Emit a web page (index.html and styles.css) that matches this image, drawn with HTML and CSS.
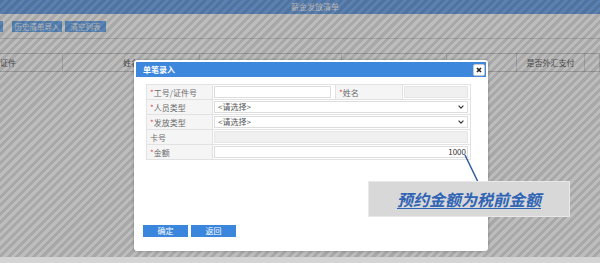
FILE: index.html
```html
<!DOCTYPE html>
<html lang="zh-CN">
<head>
    <meta charset="UTF-8">
    <meta name="viewport" content="width=device-width, initial-scale=1.0">
    <title>薪金发放清单</title>
    <link rel="stylesheet" href="styles.css">
</head>
<body>
    <div class="page">
        <div class="topbar">薪金发放清单</div>
        <div class="toolbar">
            <button class="tb-btn tb-cut"></button>
            <button class="tb-btn tb-hist">历史清单导入</button>
            <button class="tb-btn tb-clear">清空列表</button>
        </div>
        <div class="grid-head">
            <div class="gh-cell gh-left">证件</div>
            <div class="gh-cell">姓名</div>
            <div class="gh-cell"></div>
            <div class="gh-cell"></div>
            <div class="gh-cell"></div>
            <div class="gh-cell">是否外汇支付</div>
            <div class="gh-cell"></div>
        </div>
    </div>

    <!-- modal backdrop -->
    <div class="mask"></div>

    <div class="dialog">
        <div class="dlg-title">
            <span>单笔录入</span>
            <span class="dlg-close">
                <svg width="6" height="6" viewBox="0 0 6 6"><path d="M1 1L5 5M5 1L1 5" stroke="#222" stroke-width="1.6"/></svg>
            </span>
        </div>
        <div class="dlg-body">
            <table class="form-table">
                <colgroup>
                    <col class="c-lbl">
                    <col class="c-val">
                    <col class="c-lbl2">
                    <col class="c-val2">
                </colgroup>
                <tr>
                    <td class="lbl"><i>*</i>工号/证件号</td>
                    <td><div class="inp inp-short"></div></td>
                    <td class="lbl"><i>*</i>姓名</td>
                    <td><div class="inp inp-gray"></div></td>
                </tr>
                <tr>
                    <td class="lbl"><i>*</i>人员类型</td>
                    <td colspan="3">
                        <div class="inp sel"><span>&lt;请选择&gt;</span>
                            <svg width="6" height="4" viewBox="0 0 6 4"><path d="M0.6 0.6L3 3.1L5.4 0.6" fill="none" stroke="#333" stroke-width="1.1"/></svg>
                        </div>
                    </td>
                </tr>
                <tr>
                    <td class="lbl"><i>*</i>发放类型</td>
                    <td colspan="3">
                        <div class="inp sel"><span>&lt;请选择&gt;</span>
                            <svg width="6" height="4" viewBox="0 0 6 4"><path d="M0.6 0.6L3 3.1L5.4 0.6" fill="none" stroke="#333" stroke-width="1.1"/></svg>
                        </div>
                    </td>
                </tr>
                <tr>
                    <td class="lbl">卡号</td>
                    <td colspan="3"><div class="inp inp-gray"></div></td>
                </tr>
                <tr>
                    <td class="lbl"><i>*</i>金额</td>
                    <td colspan="3"><div class="inp inp-money">1000</div></td>
                </tr>
            </table>
            <div class="dlg-foot">
                <button class="btn">确定</button>
                <button class="btn">返回</button>
            </div>
        </div>
    </div>

    <svg class="connector" width="20" height="30" viewBox="0 0 20 30">
        <line x1="3" y1="1" x2="16" y2="28" stroke="#2c5c9c" stroke-width="1.5"/>
    </svg>
    <div class="callout">预约金额为税前金额</div>
</body>
</html>
```

FILE: styles.css
```css
* {
    box-sizing: border-box;
    margin: 0;
    padding: 0;
}

body {
    width: 600px;
    height: 263px;
    overflow: hidden;
    position: relative;
    background-color: #d4d4d4;
    font-family: "Noto Sans CJK SC", "Noto Sans", sans-serif;
    font-size: 8px;
}

.page {
    height: 257px;
    background-color: #ffffff;
}

.topbar {
    height: 14px;
    line-height: 14px;
    background-color: #7aaef0;
    color: #ffffff;
    text-align: center;
    padding-left: 30px;
}

.toolbar {
    display: flex;
    align-items: flex-start;
    height: 25px;
    padding-top: 7px;
    border-bottom: 1px solid #dddddd;
}

.tb-btn {
    height: 11px;
    line-height: 11px;
    border: none;
    background-color: #78b4f8;
    color: #ffffff;
    font-family: inherit;
    font-size: 7.5px;
    text-align: center;
}

.tb-cut {
    width: 3px;
}

.tb-hist {
    width: 50px;
    margin-left: 9px;
}

.tb-clear {
    width: 41px;
    margin-left: 3px;
}

.grid-head {
    display: grid;
    grid-template-columns: 63px 137px 142px 105px 70px 68px 15px;
    height: 19px;
    margin-top: 14px;
    border-top: 1px solid #d0d0d0;
    border-bottom: 1px solid #d0d0d0;
}

.gh-cell {
    border-right: 1px solid #dddddd;
    color: #6a6a6a;
    text-align: center;
    line-height: 17px;
}

.gh-left {
    text-align: left;
}

.mask {
    position: absolute;
    left: 0;
    top: 0;
    width: 600px;
    height: 257px;
    background: repeating-linear-gradient(135deg, rgba(0, 0, 0, 0.34) 0 3px, rgba(0, 0, 0, 0.26) 3px 6px);
}

/* dialog */
.dialog {
    position: absolute;
    left: 134px;
    top: 60px;
    width: 354px;
    height: 191px;
    padding: 2px;
    background-color: #ffffff;
    border-radius: 3px;
    box-shadow: 0 0 3px rgba(0, 0, 0, 0.3);
    display: flex;
    flex-direction: column;
}

.dlg-title {
    height: 15px;
    display: flex;
    align-items: center;
    justify-content: space-between;
    padding: 0 1px 0 7px;
    background-color: #3d87dd;
    color: #ffffff;
    font-weight: bold;
}

.dlg-close {
    width: 12px;
    height: 12px;
    display: flex;
    align-items: center;
    justify-content: center;
    background-color: #ffffff;
    border: 1px solid #c8c8c8;
    border-radius: 2px;
}

.dlg-body {
    flex: 1;
    display: flex;
    flex-direction: column;
    padding: 7px 0 12px 10px;
}

.form-table {
    width: 324px;
    border-collapse: collapse;
    table-layout: fixed;
}

.c-lbl {
    width: 66px;
}

.c-val {
    width: 123px;
}

.c-lbl2 {
    width: 67px;
}

.c-val2 {
    width: 68px;
}

.form-table td {
    height: 15px;
    border: 1px solid #e2e2e2;
    padding: 0 2px 0 1px;
}

.form-table .lbl {
    padding-left: 3px;
    background-color: #f5f5f5;
    color: #6b6b6b;
    white-space: nowrap;
    overflow: hidden;
}

.lbl i {
    font-style: normal;
    color: #e04848;
}

.inp {
    height: 12px;
    border: 1px solid #dddddd;
    background-color: #ffffff;
}

.inp-short {
    width: 117px;
}

.inp-gray {
    background-color: #f0f0f0;
    border-color: #e6e6e6;
}

.sel {
    display: flex;
    align-items: center;
    justify-content: space-between;
    padding: 0 3px;
    color: #555555;
    line-height: 10px;
}

.inp-money {
    text-align: right;
    color: #333333;
    line-height: 10px;
    padding-right: 1px;
}

.dlg-foot {
    margin-top: auto;
    margin-left: -3px;
    display: flex;
    gap: 3px;
}

.btn {
    width: 45px;
    height: 12px;
    border: none;
    background-color: #3a86dd;
    color: #ffffff;
    font-family: inherit;
    font-size: 8px;
    line-height: 12px;
}

/* annotation */
.connector {
    position: absolute;
    left: 462px;
    top: 154px;
}

.callout {
    position: absolute;
    left: 368px;
    top: 181px;
    width: 202px;
    height: 36px;
    display: flex;
    align-items: center;
    justify-content: center;
    background-color: #d8d8d8;
    border: 1px solid #e8e8e8;
    color: #2f63b5;
    font-size: 16px;
    font-style: italic;
    font-weight: bold;
    text-decoration: underline;
    text-underline-offset: 2px;
}
```
